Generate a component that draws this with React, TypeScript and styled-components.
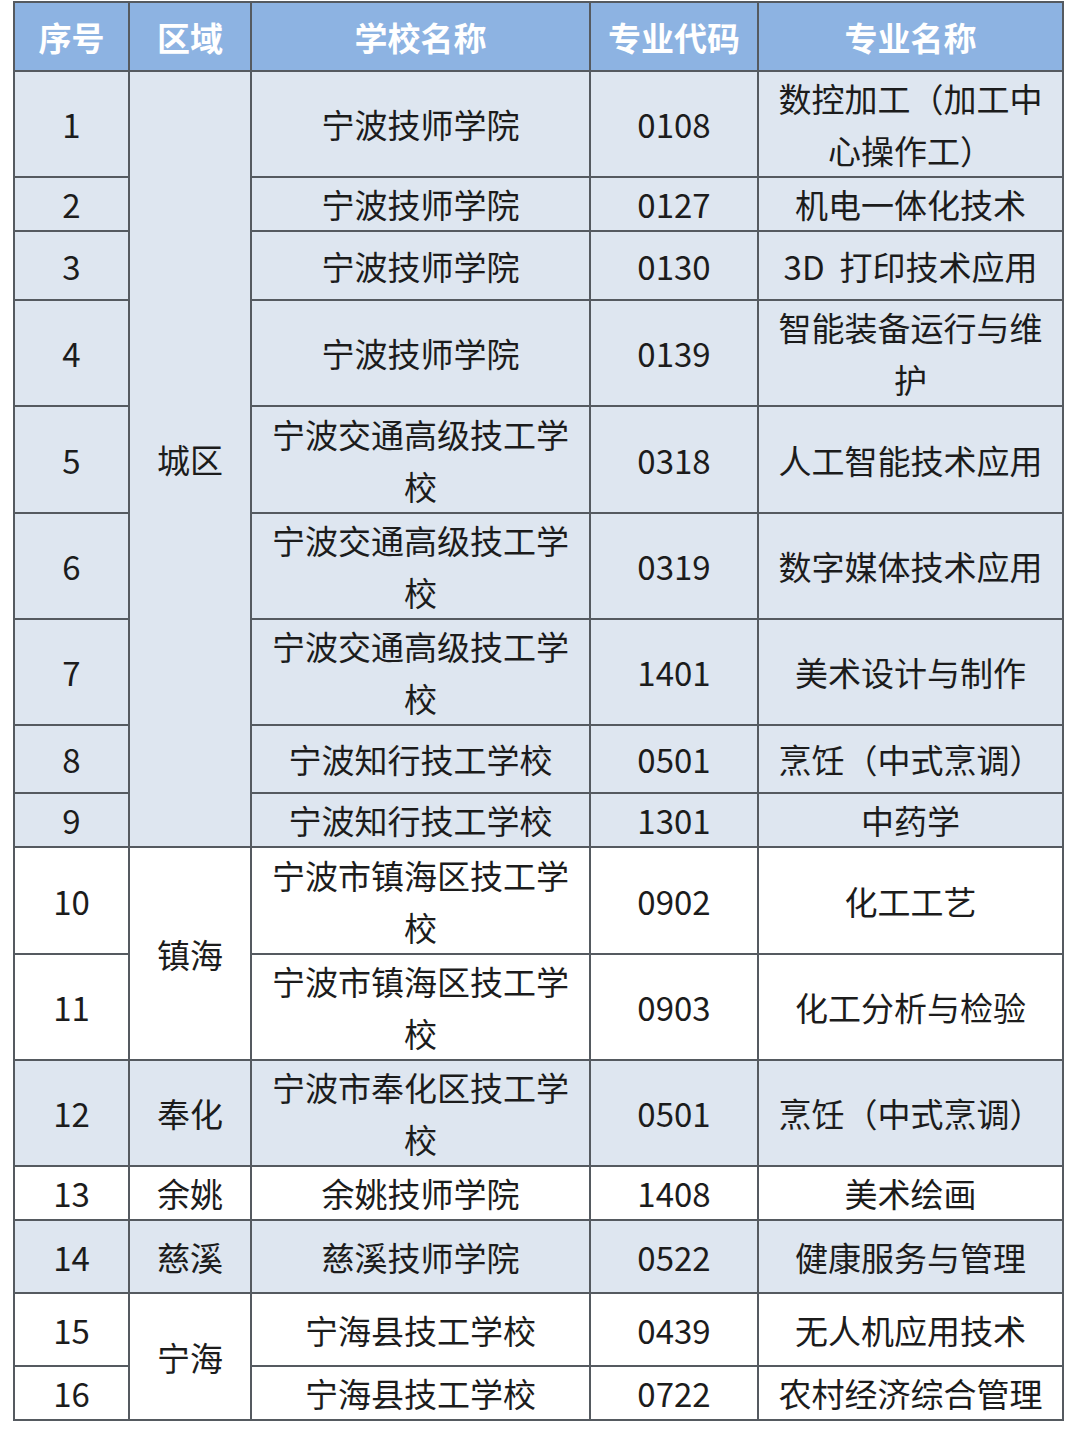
import styled, { createGlobalStyle } from 'styled-components'

type Row = {
  no: number
  area?: { name: string; span: number }
  school: string
  code: string
  major: string
  h: number
  shade: boolean
}

// heights are the cell heights without the 2px collapsed border
const rows: Row[] = [
  { no: 1, area: { name: '城区', span: 9 }, school: '宁波技师学院', code: '0108', major: '数控加工（加工中心操作工）', h: 104, shade: true },
  { no: 2, school: '宁波技师学院', code: '0127', major: '机电一体化技术', h: 52, shade: true },
  { no: 3, school: '宁波技师学院', code: '0130', major: '3D\u00a0\u00a0打印技术应用', h: 67, shade: true },
  { no: 4, school: '宁波技师学院', code: '0139', major: '智能装备运行与维护', h: 104, shade: true },
  { no: 5, school: '宁波交通高级技工学校', code: '0318', major: '人工智能技术应用', h: 105, shade: true },
  { no: 6, school: '宁波交通高级技工学校', code: '0319', major: '数字媒体技术应用', h: 104, shade: true },
  { no: 7, school: '宁波交通高级技工学校', code: '1401', major: '美术设计与制作', h: 104, shade: true },
  { no: 8, school: '宁波知行技工学校', code: '0501', major: '烹饪（中式烹调）', h: 66, shade: true },
  { no: 9, school: '宁波知行技工学校', code: '1301', major: '中药学', h: 52, shade: true },
  { no: 10, area: { name: '镇海', span: 2 }, school: '宁波市镇海区技工学校', code: '0902', major: '化工工艺', h: 105, shade: false },
  { no: 11, school: '宁波市镇海区技工学校', code: '0903', major: '化工分析与检验', h: 104, shade: false },
  { no: 12, area: { name: '奉化', span: 1 }, school: '宁波市奉化区技工学校', code: '0501', major: '烹饪（中式烹调）', h: 104, shade: true },
  { no: 13, area: { name: '余姚', span: 1 }, school: '余姚技师学院', code: '1408', major: '美术绘画', h: 52, shade: false },
  { no: 14, area: { name: '慈溪', span: 1 }, school: '慈溪技师学院', code: '0522', major: '健康服务与管理', h: 71, shade: true },
  { no: 15, area: { name: '宁海', span: 2 }, school: '宁海县技工学校', code: '0439', major: '无人机应用技术', h: 71, shade: false },
  { no: 16, school: '宁海县技工学校', code: '0722', major: '农村经济综合管理', h: 52, shade: false },
]

const headers = ['序号', '区域', '学校名称', '专业代码', '专业名称']
const widths = [115, 122, 339, 168, 305]

const App = () => {
  return (
    <Page>
      <GlobalStyle />
      <Table>
        <colgroup>
          {widths.map((w, i) => (
            <col key={i} style={{ width: w }} />
          ))}
        </colgroup>
        <thead>
          <tr>
            {headers.map((h) => (
              <HeadCell key={h}>{h}</HeadCell>
            ))}
          </tr>
        </thead>
        <tbody>
          {rows.map((r) => (
            <tr key={r.no}>
              <Cell $shade={r.shade} style={{ height: r.h }}>{r.no}</Cell>
              {r.area && (
                <Cell $shade={r.shade} rowSpan={r.area.span}>
                  {r.area.name}
                </Cell>
              )}
              <Cell $shade={r.shade}>{r.school}</Cell>
              <Cell $shade={r.shade}>{r.code}</Cell>
              <Cell $shade={r.shade}>{r.major}</Cell>
            </tr>
          ))}
        </tbody>
      </Table>
    </Page>
  )
}

const GlobalStyle = createGlobalStyle`
  html, body {
    margin: 0;
    padding: 0;
    background: #ffffff;
  }
  body {
    font-family: "Noto Sans CJK SC", "Noto Sans", sans-serif;
  }
`

const Page = styled.div`
  width: 1080px;
  height: 1435px;
  padding: 1px 0 0 13px;
  box-sizing: border-box;
`

const Table = styled.table`
  border-collapse: collapse;
  table-layout: fixed;
  width: 1049px;
`

const HeadCell = styled.th`
  height: 67px;
  padding: 0 8px;
  background: #8db3e2;
  border: 2px solid #555a60;
  color: #ffffff;
  font-size: 33px;
  font-weight: 700;
  line-height: 52px;
  text-align: center;
  vertical-align: middle;
`

const Cell = styled.td<{ $shade: boolean }>`
  padding: 0 8px;
  background: ${(p) => (p.$shade ? '#dee6f0' : '#ffffff')};
  border: 2px solid #555a60;
  color: #1c1c1c;
  font-size: 33px;
  font-weight: 400;
  line-height: 52px;
  text-align: center;
  vertical-align: middle;
`

export default App
